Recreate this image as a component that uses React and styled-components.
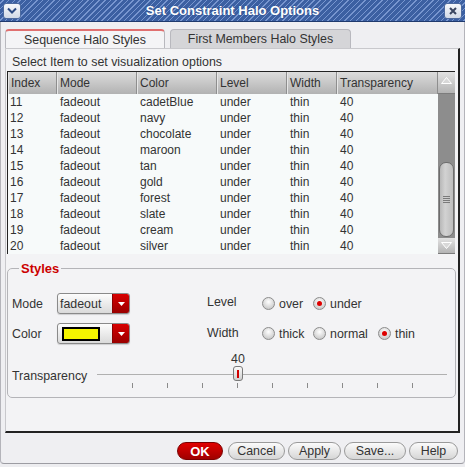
import React from 'react';
import styled, { createGlobalStyle } from 'styled-components';

const GlobalStyle = createGlobalStyle`
  html, body {
    margin: 0;
    padding: 0;
    background: #ededf0;
  }
  body {
    font-family: "Liberation Sans", Arial, sans-serif;
    font-size: 12px;
    color: #333;
  }
`;

const Window = styled.div`
  width: 465px;
  height: 467px;
  display: flex;
  flex-direction: column;
  background: #ededf0;
`;

const TitleBar = styled.div`
  height: 22px;
  box-sizing: border-box;
  display: flex;
  align-items: center;
  justify-content: space-between;
  padding: 0 3px;
  background: repeating-linear-gradient(135deg, #3c60a2 0 2px, #7896cf 2px 3px, #3c60a2 3px 4px);
  border-bottom: 1px solid #1f3a6e;
`;

const Title = styled.div`
  flex: 1;
  text-align: center;
  color: #fff;
  font-weight: bold;
  font-size: 13px;
  text-shadow: 0 0 2px #2a4a85;
`;

const TitleButton = styled.div`
  width: 18px;
  height: 16px;
  box-sizing: border-box;
  border: 1px solid #4d6a9e;
  border-radius: 3px;
  background: linear-gradient(#f6f8fb, #d3dae6);
  display: flex;
  align-items: center;
  justify-content: center;
`;

const Frame = styled.div`
  flex: 1;
  display: flex;
  flex-direction: column;
  padding: 7px 4px 0 4px;
  border-left: 1px solid #b4b4ba;
  border-right: 1px solid #b4b4ba;
  border-bottom: 1px solid #9c9ca2;
  border-radius: 0 0 4px 4px;
  margin-bottom: 3px;
  background: #efeff2;
`;

const TabRow = styled.div`
  display: flex;
  gap: 5px;
  height: 19px;
  align-items: flex-end;
`;

const Tab = styled.div`
  box-sizing: border-box;
  width: ${p => p.width}px;
  height: 19px;
  display: flex;
  align-items: center;
  justify-content: center;
  font-size: 12.4px;
  color: #333;
  border: 1px solid #b8b8be;
  border-bottom: none;
  border-radius: 4px 4px 0 0;
  ${p =>
    p.selected
      ? `background: #f4f4f6; border-top: 2px solid #e07070; margin-bottom: -1px; height: 20px;`
      : `background: #d5d5d8;`}
`;

const Panel = styled.div`
  box-sizing: border-box;
  height: 385px;
  padding: 5px 1px 0 1px;
  background: #f3f3f5;
  border-left: 1px solid #c8c8cc;
  border-top: 1px solid #c8c8cc;
  border-right: 2px solid #222;
  border-bottom: 2px solid #222;
`;

const Hint = styled.div`
  line-height: 16px;
  padding-left: 5px;
  font-size: 12.4px;
`;

const Table = styled.div`
  margin-top: 1px;
  width: 448px;
  display: flex;
  border-top: 1px solid #222;
  border-left: 1px solid #222;
  box-sizing: border-box;
  background: #f7fafa;
`;

const Grid = styled.div`
  display: grid;
  grid-template-columns: 49px 80px 80px 70px 50px 101px;
  grid-auto-rows: 16px;
  grid-template-rows: 22px;
  width: 430px;
`;

const HeadCell = styled.div`
  height: 22px;
  box-sizing: border-box;
  display: flex;
  align-items: center;
  padding-left: 2px;
  background: linear-gradient(#dcdcdc, #b2b2b2);
  border-right: 1px solid #8e8e8e;
  border-left: 1px solid #e6e6e6;
  color: #333;
`;

const Cell = styled.div`
  line-height: 16px;
  padding-left: 3px;
  color: #333;
`;

const Scrollbar = styled.div`
  width: 17px;
  display: flex;
  flex-direction: column;
  background: #8d8d8d;
`;

const ScrollButton = styled.div`
  height: ${p => p.h}px;
  box-sizing: border-box;
  display: flex;
  align-items: ${p => (p.up ? 'flex-start' : 'center')};
  justify-content: center;
  padding-top: ${p => (p.up ? 5 : 0)}px;
  background: linear-gradient(#e2e2e2, #b4b4b4);
  border-bottom: 1px solid #7c7c7c;
`;

const Track = styled.div`
  flex: 1;
  display: flex;
  flex-direction: column;
  justify-content: flex-end;
  padding: 0 1px 1px;
`;

const Thumb = styled.div`
  height: 75px;
  box-sizing: border-box;
  border: 1px solid #6d6d6d;
  border-radius: 7px;
  background: linear-gradient(90deg, #b8b8b8, #d2d2d2 40%, #bdbdbd);
  display: flex;
  align-items: center;
  justify-content: center;
`;

const Group = styled.fieldset`
  margin: 7px 0 0 0;
  width: 449px;
  height: 137px;
  box-sizing: border-box;
  padding: 17px 0 0 4px;
  border: 1px solid #b4b4b8;
  border-radius: 5px;
  min-width: 0;
`;

const Legend = styled.legend`
  color: #cc0000;
  font-weight: bold;
  font-size: 13px;
  line-height: 15px;
  padding: 0 2px;
  margin-left: 7px;
`;

const FormGrid = styled.div`
  display: grid;
  grid-template-columns: 45px 150px 55px 51px 65px auto;
  grid-auto-rows: 21px;
  row-gap: 9px;
  align-items: center;
`;

const Label = styled.div`
  font-size: 12.4px;
  color: #333;
  position: relative;
  top: ${p => p.dy || 0}px;
`;

const Combo = styled.div`
  width: 73px;
  height: 21px;
  box-sizing: border-box;
  display: flex;
  border: 1px solid #8a8a8a;
  border-radius: 3px;
  overflow: hidden;
  background: linear-gradient(#fdfdfd, #dadada);
  box-shadow: 0 1px 1px rgba(0, 0, 0, 0.15);
`;

const ComboText = styled.div`
  flex: 1;
  display: flex;
  align-items: center;
  padding-left: 2px;
  font-size: 12.4px;
  color: #333;
`;

const Swatch = styled.div`
  width: 38px;
  height: 14px;
  box-sizing: border-box;
  margin-left: 2px;
  border: 2px solid #000;
  background: ${p => p.color};
`;

const ComboArrow = styled.div`
  width: 16px;
  display: flex;
  align-items: center;
  justify-content: center;
  background: linear-gradient(#d80000, #9a0000);
  border-left: 1px solid #8a0000;
`;

const Radio = styled.div`
  display: flex;
  align-items: center;
  gap: 4px;
  font-size: 12.4px;
  color: #333;
`;

const RadioDot = styled.div`
  width: 13px;
  height: 13px;
  box-sizing: border-box;
  border-radius: 50%;
  border: 1px solid #8c8c8c;
  background: radial-gradient(circle at 50% 35%, #ffffff, #d0d0d0 70%, #bdbdbd);
  display: flex;
  align-items: center;
  justify-content: center;
  &::after {
    content: '';
    width: 5px;
    height: 5px;
    border-radius: 50%;
    background: ${p => (p.checked ? '#dd0000' : 'transparent')};
  }
`;

const SliderRow = styled.div`
  display: flex;
  margin-top: 8px;
`;

const SliderLabel = styled.div`
  width: 85px;
  margin-top: 17px;
  line-height: 14px;
  font-size: 12.4px;
  color: #333;
`;

const Slider = styled.div`
  width: 350px;
  position: relative;
`;

const SliderValue = styled.div`
  height: 14px;
  line-height: 14px;
  font-size: 12.4px;
  color: #333;
  position: relative;
  width: 20px;
  text-align: center;
`;

const SliderTrack = styled.div`
  height: 16px;
  position: relative;
  display: flex;
  align-items: center;
  &::before {
    content: '';
    flex: 1;
    height: 1px;
    background: #b0b0b0;
  }
`;

const SliderThumb = styled.div`
  position: absolute;
  top: 0;
  width: 10px;
  height: 15px;
  box-sizing: border-box;
  border: 1px solid #7a7a7a;
  border-radius: 3px;
  background: linear-gradient(#fafafa, #d0d0d0);
  display: flex;
  align-items: center;
  justify-content: center;
  &::after {
    content: '';
    width: 2px;
    height: 8px;
    background: #d00000;
  }
`;

const Ticks = styled.div`
  display: flex;
  padding-left: 35px;
  gap: 34px;
  height: 6px;
  margin-top: 1px;
`;

const Tick = styled.div`
  width: 1px;
  height: 5px;
  background: #8a8a8a;
`;

const ButtonRow = styled.div`
  display: flex;
  justify-content: flex-end;
  gap: 3px;
  margin-top: 9px;
  margin-right: 2px;
`;

const Button = styled.div`
  width: ${p => p.width}px;
  height: 18px;
  box-sizing: border-box;
  display: flex;
  align-items: center;
  justify-content: center;
  border-radius: 9px;
  font-size: 12.4px;
  ${p =>
    p.primary
      ? `background: linear-gradient(#e00000, #a00000); border: 1px solid #7a0000; color: #fff; font-weight: bold; font-size: 13px; margin-right: 2px;`
      : `background: linear-gradient(#fbfbfb, #d6d6d6); border: 1px solid #9a9a9a; color: #333;`}
`;

const rows = [
  [11, 'cadetBlue'],
  [12, 'navy'],
  [13, 'chocolate'],
  [14, 'maroon'],
  [15, 'tan'],
  [16, 'gold'],
  [17, 'forest'],
  [18, 'slate'],
  [19, 'cream'],
  [20, 'silver'],
];

const headers = ['Index', 'Mode', 'Color', 'Level', 'Width', 'Transparency'];

const DownTri = ({ color = '#fff' }) => (
  <svg width="7" height="4" viewBox="0 0 7 4">
    <path d="M0 0 L7 0 L3.5 4 Z" fill={color} />
  </svg>
);

function Combobox({ text, color }) {
  return (
    <Combo>
      <ComboText>{color ? <Swatch color={color} /> : text}</ComboText>
      <ComboArrow>
        <DownTri />
      </ComboArrow>
    </Combo>
  );
}

function RadioOption({ label, checked }) {
  return (
    <Radio>
      <RadioDot checked={checked} />
      {label}
    </Radio>
  );
}

export default function App() {
  const transparency = 40;
  const thumbLeft = (transparency / 100) * 350 - 4;

  return (
    <>
      <GlobalStyle />
      <Window>
        <TitleBar>
          <TitleButton>
            <svg width="10" height="7" viewBox="0 0 10 7">
              <path d="M1 1.5 L5 5.5 L9 1.5" stroke="#2c4a82" strokeWidth="2" fill="none" />
            </svg>
          </TitleButton>
          <Title>Set Constraint Halo Options</Title>
          <TitleButton>
            <svg width="8" height="8" viewBox="0 0 8 8">
              <path d="M1 1 L7 7 M7 1 L1 7" stroke="#3a4660" strokeWidth="2" />
            </svg>
          </TitleButton>
        </TitleBar>
        <Frame>
          <TabRow>
            <Tab selected width={160}>Sequence Halo Styles</Tab>
            <Tab width={181}>First Members Halo Styles</Tab>
          </TabRow>
          <Panel>
            <Hint>Select Item to set visualization options</Hint>
            <Table>
              <Grid>
                {headers.map(h => (
                  <HeadCell key={h}>{h}</HeadCell>
                ))}
                {rows.map(([idx, color]) => (
                  <React.Fragment key={idx}>
                    <Cell style={{ paddingLeft: 2 }}>{idx}</Cell>
                    <Cell>fadeout</Cell>
                    <Cell>{color}</Cell>
                    <Cell>under</Cell>
                    <Cell>thin</Cell>
                    <Cell>40</Cell>
                  </React.Fragment>
                ))}
              </Grid>
              <Scrollbar>
                <ScrollButton h={22} up>
                  <svg width="11" height="7" viewBox="0 0 11 7">
                    <path d="M0.5 6.5 L5.5 0.5 L10.5 6.5 Z" fill="#d8d8d8" stroke="#fff" />
                  </svg>
                </ScrollButton>
                <Track>
                  <Thumb>
                    <svg width="7" height="8" viewBox="0 0 7 8">
                      <path d="M0 0.5 H7 M0 2.5 H7 M0 4.5 H7 M0 6.5 H7" stroke="#7a7a7a" />
                    </svg>
                  </Thumb>
                </Track>
                <ScrollButton h={16}>
                  <svg width="11" height="7" viewBox="0 0 11 7">
                    <path d="M0.5 0.5 L10.5 0.5 L5.5 6.5 Z" fill="#d8d8d8" stroke="#fff" />
                  </svg>
                </ScrollButton>
              </Scrollbar>
            </Table>
            <Group>
              <Legend>Styles</Legend>
              <FormGrid>
                <Label>Mode</Label>
                <Combobox text="fadeout" />
                <Label dy={-2}>Level</Label>
                <RadioOption label="over" />
                <RadioOption label="under" checked />
                <div />
                <Label>Color</Label>
                <Combobox color="#f5f500" />
                <Label dy={-1}>Width</Label>
                <RadioOption label="thick" />
                <RadioOption label="normal" />
                <RadioOption label="thin" checked />
              </FormGrid>
              <SliderRow>
                <SliderLabel>Transparency</SliderLabel>
                <Slider>
                  <SliderValue style={{ left: thumbLeft - 5 }}>{transparency}</SliderValue>
                  <SliderTrack>
                    <SliderThumb style={{ left: thumbLeft }} />
                  </SliderTrack>
                  <Ticks>
                    {Array.from({ length: 9 }).map((_, i) => (
                      <Tick key={i} />
                    ))}
                  </Ticks>
                </Slider>
              </SliderRow>
            </Group>
          </Panel>
          <ButtonRow>
            <Button primary width={46}>OK</Button>
            <Button width={57}>Cancel</Button>
            <Button width={53}>Apply</Button>
            <Button width={62}>Save...</Button>
            <Button width={49}>Help</Button>
          </ButtonRow>
        </Frame>
      </Window>
    </>
  );
}
